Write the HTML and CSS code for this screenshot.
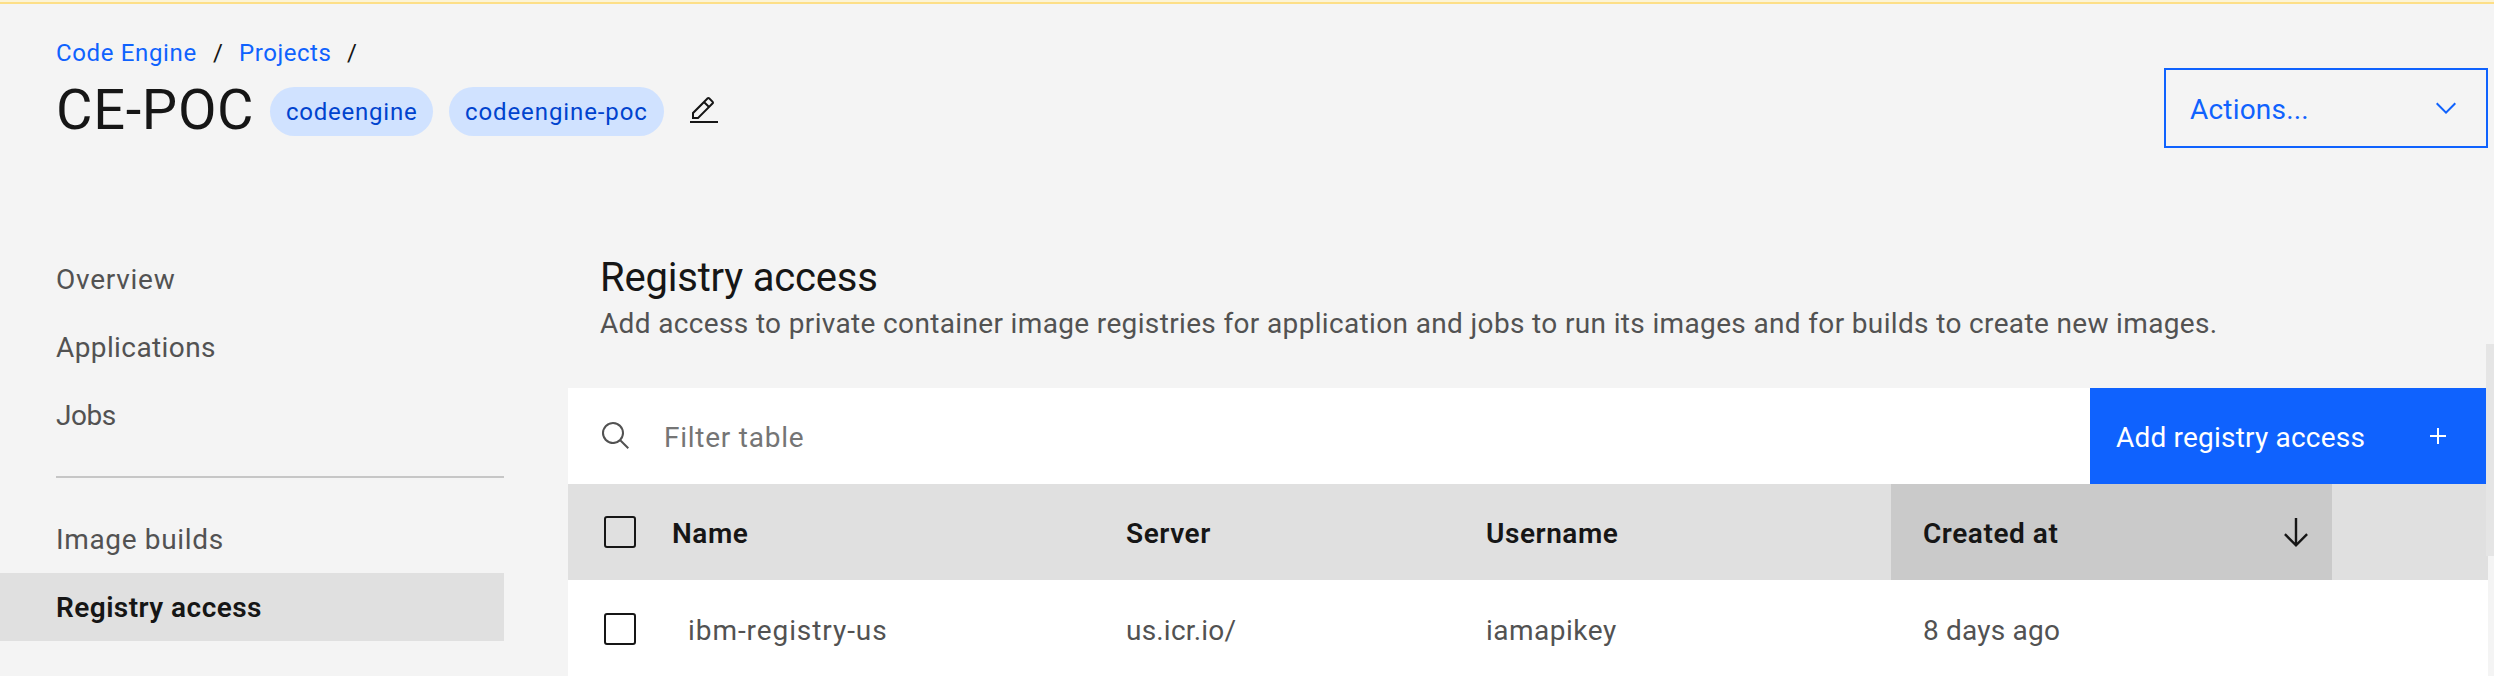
FILE: index.html
```html
<!DOCTYPE html>
<html lang="en">
<head>
<meta charset="utf-8">
<title>CE-POC - Registry access</title>
<link rel="stylesheet" href="styles.css">
</head>
<body>
<div class="page">
  <div class="banner-edge"></div>
  <header class="header">
    <div>
      <nav class="breadcrumb">
        <a class="crumb crumb-engine" href="#">Code Engine</a><span class="slash">/</span>
        <a class="crumb crumb-projects" href="#">Projects</a><span class="slash">/</span>
      </nav>
      <div class="title-row">
        <h1 class="title">CE-POC</h1>
        <span class="tag tag-short">codeengine</span>
        <span class="tag tag-long">codeengine-poc</span>
        <svg class="edit" viewBox="0 0 32 32" width="32" height="32"><path d="M2 26H30V28H2zM25.4 9c.8-.8.8-2 0-2.8l-3.6-3.6c-.8-.8-2-.8-2.8 0l-15 15V24h6.4L25.4 9zM20.4 4L24 7.6l-3 3L17.4 7 20.4 4zM6 22v-3.6l10-10 3.6 3.6-10 10H6z"/></svg>
      </div>
    </div>
    <button class="actions"><span>Actions...</span>
      <svg viewBox="0 0 16 16" width="32" height="32"><path d="M8 11L3 6l.7-.7L8 9.6l4.3-4.3.7.7z"/></svg>
    </button>
  </header>
  <div class="body">
    <nav class="sidebar">
      <a class="side-link ls-overview" href="#">Overview</a>
      <a class="side-link ls-applications" href="#">Applications</a>
      <a class="side-link ls-jobs" href="#">Jobs</a>
      <hr class="divider">
      <a class="side-link ls-builds" href="#">Image builds</a>
      <a class="side-link active" href="#">Registry access</a>
    </nav>
    <main class="main">
      <div class="intro">
        <h2 class="heading">Registry access</h2>
        <p class="description">Add access to private container image registries for application and jobs to run its images and for builds to create new images.</p>
      </div>
      <div class="toolbar">
        <div class="search">
          <svg viewBox="0 0 32 32" width="32" height="32"><path d="M29 27.586l-7.552-7.552a11.018 11.018 0 1 0-1.414 1.414L27.586 29zM4 13a9 9 0 1 1 9 9 9.01 9.01 0 0 1-9-9z"/></svg>
          <span>Filter table</span>
        </div>
        <button class="add"><span>Add registry access</span>
          <svg viewBox="0 0 16 16" width="16" height="16"><path d="M7 0h2v7h7v2H9v7H7V9H0V7h7z"/></svg>
        </button>
      </div>
      <div class="grid head">
        <div class="check"><span class="box"></span></div>
        <div class="cell">Name</div>
        <div class="cell">Server</div>
        <div class="cell">Username</div>
        <div class="cell sorted">Created at
          <svg viewBox="0 0 32 32" width="32" height="32"><path d="M16 1v28M4.9 17.2L16 28.4l11.1-11.2"/></svg>
        </div>
        <div class="cell"></div>
      </div>
      <div class="grid row">
        <div class="check"><span class="box"></span></div>
        <div class="cell name">ibm-registry-us</div>
        <div class="cell">us.icr.io/</div>
        <div class="cell user">iamapikey</div>
        <div class="cell created">8 days ago</div>
        <div class="cell"></div>
      </div>
    </main>
  </div>
  <div class="scrollbar"></div>
</div>
</body>
</html>
```
FILE: styles.css
```css
* { box-sizing: border-box; }
body { margin: 0; }
.page {
  position: relative;
  width: 2494px;
  height: 676px;
  overflow: hidden;
  background: #f4f4f4;
  color: #161616;
  font-family: Roboto, "Liberation Sans", sans-serif;
  font-size: 28px;
  line-height: 32px;
}
a { text-decoration: none; }
h1, h2, p { margin: 0; font-weight: 400; }
button { margin: 0; border: 0; font: inherit; text-align: left; }
svg { display: block; flex: none; fill: currentColor; }

.banner-edge { height: 4px; background: #fcf4d6; border-bottom: 2px solid #fddf87; }

.header {
  display: flex;
  justify-content: space-between;
  height: 241px;
  padding: 33px 6px 0 56px;
}
.breadcrumb { display: flex; height: 32px; font-size: 24px; white-space: nowrap; }
.crumb { color: #0f62fe; }
.crumb-engine { width: 141px; letter-spacing: .65px; }
.crumb-projects { width: 92px; letter-spacing: .55px; }
.slash { width: 42px; padding-left: 16px; }
.title-row { display: flex; align-items: center; height: 64px; margin-top: 9px; }
.title { width: 214px; font-size: 56px; line-height: 64px; letter-spacing: .7px; white-space: nowrap; }
.tag {
  height: 49px;
  margin: 3px 16px 0 0;
  padding: 1px 0 0 16px;
  border-radius: 25px;
  background: #d0e2ff;
  color: #0043ce;
  font-size: 24px;
  line-height: 48px;
  white-space: nowrap;
}
.tag-short { width: 163px; letter-spacing: .77px; }
.tag-long { width: 215px; letter-spacing: .9px; margin-right: 24px; }
.edit { margin-top: 2px; }
.actions {
  display: flex;
  align-items: center;
  justify-content: space-between;
  width: 324px;
  height: 80px;
  margin-top: 31px;
  padding: 2px 24px 0 24px;
  border: 2px solid #0f62fe;
  background: transparent;
  color: #0f62fe;
  letter-spacing: .2px;
}
.actions span { padding-top: 2px; }
.actions svg { margin-top: -3px; }

.body { display: flex; }
.sidebar { width: 504px; }
.side-link {
  display: block;
  height: 68px;
  padding: 19px 0 0 56px;
  color: #525252;
}
.ls-overview { letter-spacing: .75px; }
.ls-applications { letter-spacing: .4px; }
.ls-jobs { letter-spacing: -.5px; }
.ls-builds { letter-spacing: .65px; }
.divider { height: 2px; margin: 27px 0 27px 56px; border: 0; background: #c6c6c6; }
.active { background: #e0e0e0; color: #161616; font-weight: 600; letter-spacing: .45px; }

.main { width: 1920px; margin-left: 64px; }
.intro { height: 143px; padding: 9px 0 0 32px; }
.heading { font-size: 40px; line-height: 48px; letter-spacing: -.2px; }
.description { line-height: 44px; color: #525252; letter-spacing: .35px; white-space: nowrap; }
.toolbar { display: flex; width: 1918px; height: 96px; }
.search {
  display: flex;
  align-items: center;
  gap: 32px;
  flex: 1;
  padding-left: 32px;
  background: #fff;
  color: #525252;
}
.search span { padding-top: 4px; color: #757575; letter-spacing: .75px; }
.add {
  display: flex;
  align-items: center;
  justify-content: space-between;
  width: 396px;
  padding: 0 40px 0 26px;
  background: #0f62fe;
  color: #fff;
  letter-spacing: .2px;
}
.add span { padding-top: 4px; }
.grid { display: grid; grid-template-columns: 104px 454px 360px 405px 441px 156px; height: 96px; }
.check { display: flex; align-items: center; padding-left: 36px; }
.box { width: 32px; height: 32px; border: 2px solid #161616; border-radius: 3px; }
.cell { display: flex; align-items: center; padding-top: 4px; white-space: nowrap; }
.head { background: #e0e0e0; font-weight: 600; letter-spacing: .55px; }
.sorted { justify-content: space-between; padding: 4px 20px 0 32px; background: #cacaca; }
.sorted svg { margin-top: -3px; fill: none; stroke: currentColor; stroke-width: 2.4; }
.row { background: #fff; color: #525252; letter-spacing: .2px; }
.row .check { padding-top: 2px; }
.row .cell { padding-top: 5px; }
.row .name { padding-left: 16px; letter-spacing: .93px; }
.row .user { letter-spacing: .5px; }
.row .created { padding-left: 32px; }

.scrollbar {
  position: absolute;
  top: 344px;
  right: 0;
  width: 8px;
  height: 212px;
  background: #e5e5e5;
}
```
